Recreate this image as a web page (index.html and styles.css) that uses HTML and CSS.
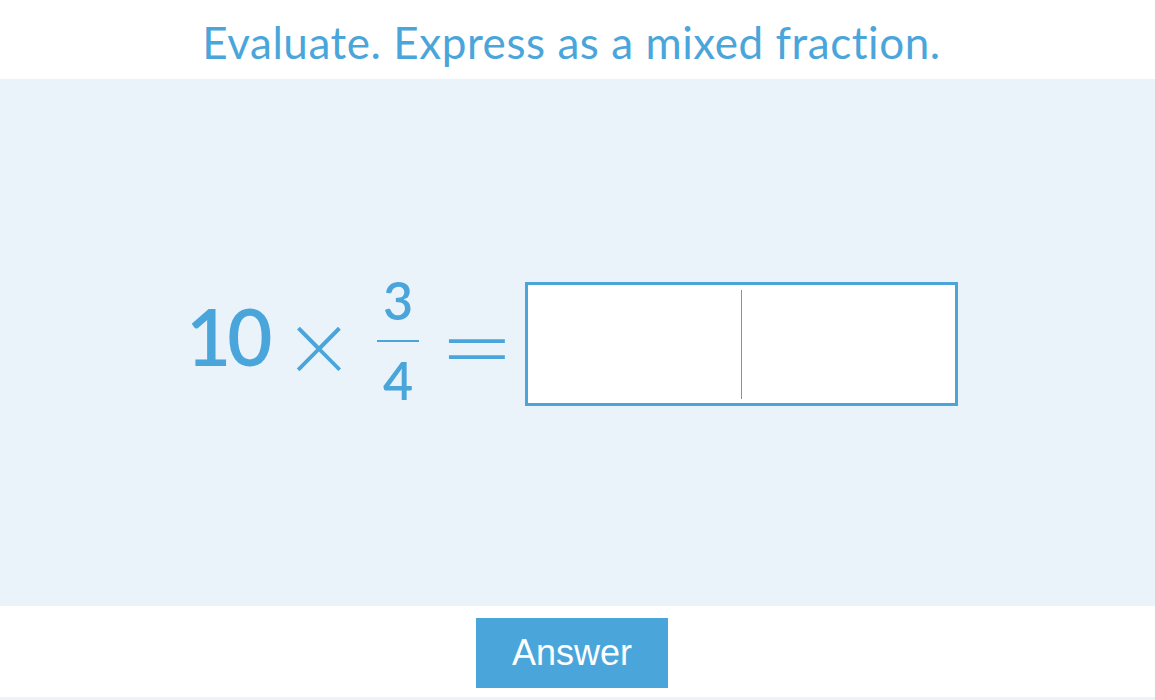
FILE: index.html
```html
<!DOCTYPE html>
<html>
<head>
<meta charset="utf-8">
<link rel="stylesheet" href="styles.css">
</head>
<body>
<div class="page">
  <header class="title">Evaluate. Express as a mixed fraction.</header>
  <main class="band">
    <div class="expr">
      <span class="num">10</span>
      <span class="op times">×</span>
      <span class="frac">
        <span class="fn">3</span>
        <span class="fbar"></span>
        <span class="fd">4</span>
      </span>
      <span class="op eq">=</span>
      <div class="answer">
        <div class="cell"></div>
        <div class="divider"></div>
        <div class="cell"></div>
      </div>
    </div>
  </main>
  <footer class="actions">
    <button class="btn">Answer</button>
  </footer>
  <div class="strip"></div>
</div>
</body>
</html>
```

FILE: styles.css
```css
html, body {
  margin: 0;
  padding: 0;
  background: #ffffff;
}
.page {
  width: 1155px;
  height: 700px;
  display: flex;
  flex-direction: column;
  font-family: Lato, "Open Sans", sans-serif;
  color: #4aa6da;
}
.title {
  height: 79px;
  display: flex;
  align-items: center;
  justify-content: center;
  font-size: 44px;
  letter-spacing: 0.55px;
  font-weight: 400;
  padding-top: 4px;
  padding-right: 12px;
  box-sizing: border-box;
}
.band {
  height: 527px;
  background: #eaf3fa;
  display: flex;
  align-items: center;
  justify-content: center;
  padding-right: 7px;
}
.expr {
  display: flex;
  align-items: center;
  padding-top: 2px;
}
.num {
  width: 80px;
  font-size: 78px;
  font-weight: 600;
  letter-spacing: -4px;
  line-height: 1;
  margin-left: -4px;
  margin-right: 31px;
  margin-bottom: 16px;
  white-space: nowrap;
}
.op {
  line-height: 1;
  font-weight: 300;
  display: flex;
  justify-content: center;
  align-items: center;
  height: 60px;
  overflow: visible;
}
.times {
  width: 44px;
  font-size: 104px;
  margin-right: 36px;
}
.eq {
  width: 58px;
  font-size: 100px;
  margin-right: 19px;
  margin-left: 29px;
  transform: scaleX(1.35);
}
.frac {
  display: flex;
  flex-direction: column;
  align-items: center;
  width: 42px;
  font-size: 52px;
  font-weight: 600;
  line-height: 1;
  margin-bottom: 8px;
}
.fbar {
  width: 42px;
  height: 2px;
  background: #4aa6da;
  margin: 14px 0 12px;
}
.answer {
  width: 433px;
  height: 124px;
  box-sizing: border-box;
  border: 3px solid #4aa6da;
  background: #ffffff;
  display: flex;
}
.cell {
  flex: 1;
}
.divider {
  width: 1px;
  background: #4aa6da;
  margin: 5px 0 4px;
}
.actions {
  height: 91px;
  display: flex;
  justify-content: center;
  align-items: flex-start;
  padding-top: 12px;
  padding-right: 11px;
  box-sizing: border-box;
}
.btn {
  width: 192px;
  height: 70px;
  border: none;
  background: #4aa6da;
  color: #ffffff;
  font-family: "Liberation Sans", Arial, sans-serif;
  font-size: 36px;
  padding: 0;
}
.strip {
  height: 3px;
  background: #eef2f6;
}
```
